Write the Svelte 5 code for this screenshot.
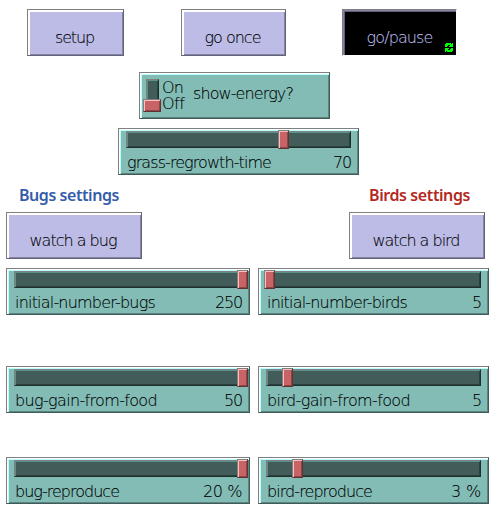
<script>
  const grass = { name: 'grass-regrowth-time', w: 144, value: '70', vw: 18, knob: 159, width: 241 };
  const rows = [
    [
      { name: 'initial-number-bugs', w: 140, value: '250', vw: 27, knob: 230, width: 244 },
      { name: 'initial-number-birds', w: 140, value: '5', vw: 9, knob: 5, width: 231 }
    ],
    [
      { name: 'bug-gain-from-food', w: 142, value: '50', vw: 18, knob: 230, width: 244 },
      { name: 'bird-gain-from-food', w: 143, value: '5', vw: 9, knob: 23, width: 231 }
    ],
    [
      { name: 'bug-reproduce', w: 104, value: '20 %', vw: 39, knob: 230, width: 244 },
      { name: 'bird-reproduce', w: 105, value: '3 %', vw: 30, knob: 33, width: 231 }
    ]
  ];

  // Spreads a label's letters over the given advance width.
  function fit(node, width) {
    const natural = node.getBoundingClientRect().width;
    node.style.letterSpacing = `${(width - natural) / node.textContent.length}px`;
  }
</script>

{#snippet slider(s)}
  <div class="panel slider" style:width="{s.width}px">
    <div class="track"></div>
    <div class="knob" style:left="{s.knob}px"></div>
    <div class="caption">
      <span use:fit={s.w}>{s.name}</span>
      <span use:fit={s.vw}>{s.value}</span>
    </div>
  </div>
{/snippet}

<main>
  <div class="buttons">
    <button class="setup"><span use:fit={39}>setup</span></button>
    <button class="once"><span use:fit={56}>go once</span></button>
    <button class="go pressed">
      <span use:fit={66}>go/pause</span>
      <svg class="loop" width="8" height="9" viewBox="0 0 8 9" shape-rendering="crispEdges" fill="#00ff00">
        <path d="M1 0h5v1h1V0h1v4H4V3h1V2H3v1H2v1H0V1h1zM0 5h4v1H3v1h2V6h1V5h2v3H7v1H2V8H1v1H0z" />
      </svg>
    </button>
  </div>

  <div class="panel switch">
    <div class="groove"></div>
    <div class="toggle"></div>
    <div class="states"><span use:fit={21}>On</span><span use:fit={22}>Off</span></div>
    <span class="switch-name" use:fit={100}>show-energy?</span>
  </div>

  <div class="grass">{@render slider(grass)}</div>

  <div class="headings">
    <strong class="bugs" use:fit={100}>Bugs settings</strong>
    <strong class="birds" use:fit={101}>Birds settings</strong>
  </div>

  <div class="watchers">
    <button><span use:fit={87}>watch a bug</span></button>
    <button><span use:fit={87}>watch a bird</span></button>
  </div>

  <div class="settings">
    {#each rows as row}
      <div class="row">
        {#each row as s}{@render slider(s)}{/each}
      </div>
    {/each}
  </div>
</main>

<style>
  :global(body) { background: #fff; }
  main {
    box-sizing: border-box;
    width: 501px;
    height: 508px;
    padding-top: 9px;
    overflow: hidden;
    font: 200 16px/20px "DejaVu Sans Light", "DejaVu Sans", sans-serif;
    color: #000;
  }
  span, strong { display: inline-block; white-space: pre; }
  span { -webkit-text-stroke: 0.1px currentColor; }
  .buttons { display: flex; padding-left: 27px; }
  button {
    position: relative;
    box-sizing: border-box;
    display: flex;
    justify-content: center;
    width: 136px;
    height: 47px;
    margin: 0;
    padding: 18px 2px 0 0;
    border: 1px solid;
    border-color: #808080 #62627a #62627a #808080;
    background: #bcbce6;
    box-shadow: inset 2px 2px #fff, inset -1px -1px #8585a3;
    font: inherit;
    color: #000;
    border-radius: 0;
  }
  .setup { width: 97px; }
  .once { width: 105px; margin-left: 57px; }
  .go { width: 115px; margin-left: 56px; }
  .pressed {
    padding-right: 0;
    background: #000;
    color: #bcbce6;
    border-color: #808080 #fff #fff #808080;
    box-shadow: inset 1px 1px #8585a3, inset 2px 2px #62627a, inset -1px -1px #000;
  }
  .loop { position: absolute; right: 3px; bottom: 3px; }
  .panel {
    position: relative;
    box-sizing: border-box;
    height: 47px;
    border: 1px solid;
    border-color: #808080 #405c59 #405c59 #808080;
    background: #82bcb5;
    box-shadow: inset 1px 1px #fff, inset 2px 2px #b5ffff, inset -1px -1px #5b837f;
  }
  .switch { display: flex; width: 191px; margin: 16px 0 0 139px; }
  .groove, .track {
    box-sizing: border-box;
    border: 1px solid;
    border-color: #808080 #20302e #20302e #808080;
    background: #425d59;
    box-shadow: inset 1px 1px #5b9189, inset -1px -1px #2c403d;
  }
  .groove { width: 13px; height: 32px; margin: 6px 0 0 6px; }
  .toggle, .knob {
    position: absolute;
    box-sizing: border-box;
    width: 11px;
    height: 19px;
    border: 1px solid;
    border-color: #808080 #643233 #643233 #808080;
    background: #c86466;
    box-shadow: inset 1px 1px #ffbdbd, inset -1px -1px #8c4647;
  }
  .toggle { left: 3px; top: 26px; width: 18px; height: 13px; }
  .knob { top: 1px; }
  .states {
    display: flex;
    flex-direction: column;
    width: 30px;
    margin: 7px 0 0 3px;
    line-height: 16px;
    align-items: flex-start;
  }
  .switch-name { margin: 11px 0 0 1px; align-self: flex-start; }
  .grass { padding: 9px 0 0 118px; }
  .track { height: 17px; margin: 2px 7px 0; }
  .caption { display: flex; justify-content: space-between; padding: 5px 7px 0 8px; }
  .headings { display: flex; justify-content: space-between; padding: 10px 31px 0 19px; height: 27px; }
  strong { font-family: "Noto Sans", "Open Sans", sans-serif; font-size: 16px; font-weight: 600; }
  .bugs { color: #345da9; }
  .birds { color: #b42822; }
  .watchers { display: flex; justify-content: space-between; width: 479px; margin-left: 6px; }
  .settings { padding: 9px 0 0 6px; }
  .row { display: flex; gap: 8px; }
  .row:nth-child(2) { margin-top: 51px; }
  .row:nth-child(3) { margin-top: 44px; }
</style>
